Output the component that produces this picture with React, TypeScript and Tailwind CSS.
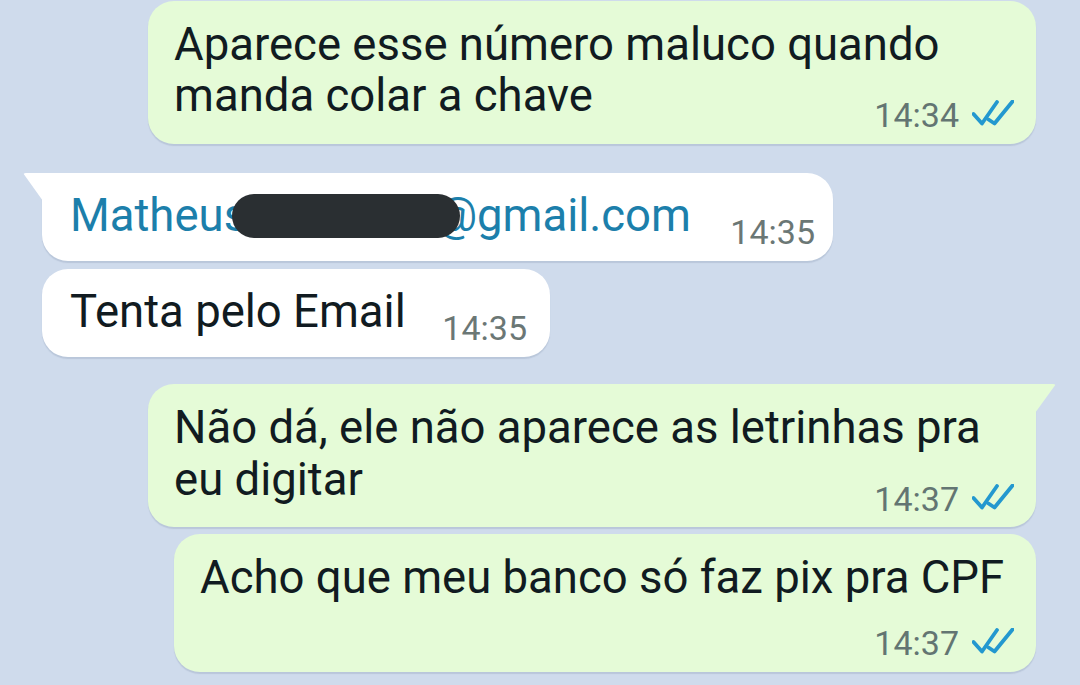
import React from "react";

function Ticks() {
  return (
    <svg width="42" height="26" viewBox="0 0 42 26" fill="none" className="ml-[13px] -mt-[4px]">
      <path d="M1.5 14 L10 23.5 L25 2" stroke="#2398cf" strokeWidth="3.8" strokeLinecap="round" strokeLinejoin="round" />
      <path d="M16.5 19.5 L22.5 23.5 L40.5 1.5" stroke="#2398cf" strokeWidth="3.8" strokeLinecap="round" strokeLinejoin="round" />
    </svg>
  );
}

function OutTime({ time, className }: { time: string; className: string }) {
  return (
    <div className={`flex items-center justify-end ${className}`}>
      <span className="text-[34px] leading-[40px] text-[#637572]">{time}</span>
      <Ticks />
    </div>
  );
}

export default function App() {
  return (
    <div
      className="w-full h-[685px] overflow-hidden bg-[#cfdbec] flex flex-col pt-[1px]"
      style={{ fontFamily: "Roboto, 'Noto Sans', sans-serif" }}
    >
      {/* sent */}
      <div className="flex justify-end pr-[44px]">
        <div className="w-[888px] rounded-[26px] bg-[#e5fbd7] shadow-[0_2px_1px_rgba(60,80,110,0.14)] pl-[26px] pr-[22px] pt-[18px] pb-[9px]">
          <p className="text-[45.5px] leading-[51px] text-[#111b21]">Aparece esse número maluco quando manda colar a chave</p>
          <OutTime time="14:34" className="-mt-[26px]" />
        </div>
      </div>

      {/* received */}
      <div className="flex pl-[42px] mt-[29px]">
        <div className="relative w-[791px] rounded-[26px] rounded-tl-none bg-white shadow-[0_2px_1px_rgba(60,80,110,0.14)] pl-[28px] pr-[18px] pt-[17px] pb-[9px] flex items-end justify-between">
          <div className="absolute -left-[19px] top-0 w-[20px] h-[28px] bg-white [clip-path:polygon(0_0,100%_0,100%_100%)] rounded-tl-[3px]" />
          <p className="text-[45.5px] leading-[51px] text-[#1c7fab] mb-[11px] whitespace-nowrap">
            Matheus
            <span className="relative z-10 inline-block w-[228px] h-[44px] rounded-full bg-[#2a2f32] align-[-7px] -ml-[15px] -mr-[24px]" />
            @gmail.com
          </p>
          <span className="text-[34px] leading-[40px] text-[#6b7775]">14:35</span>
        </div>
      </div>

      <div className="flex pl-[42px] mt-[8px]">
        <div className="w-[508px] rounded-[26px] bg-white shadow-[0_2px_1px_rgba(60,80,110,0.14)] pl-[28px] pr-[23px] pt-[17px] pb-[9px] flex items-end justify-between">
          <p className="text-[45.5px] leading-[51px] text-[#111b21] mb-[11px] whitespace-nowrap">Tenta pelo Email</p>
          <span className="text-[34px] leading-[40px] text-[#6b7775]">14:35</span>
        </div>
      </div>

      {/* sent */}
      <div className="flex justify-end pr-[44px] mt-[27px]">
        <div className="relative w-[888px] rounded-[26px] rounded-tr-none bg-[#e5fbd7] shadow-[0_2px_1px_rgba(60,80,110,0.14)] pl-[26px] pr-[22px] pt-[18px] pb-[8px]">
          <div className="absolute -right-[20px] top-0 w-[21px] h-[29px] bg-[#e5fbd7] [clip-path:polygon(0_0,100%_0,0_100%)] rounded-tr-[3px]" />
          <p className="text-[45.5px] leading-[52px] text-[#111b21]">Não dá, ele não aparece as letrinhas pra eu digitar</p>
          <OutTime time="14:37" className="-mt-[27px]" />
        </div>
      </div>

      <div className="flex justify-end pr-[44px] mt-[7px]">
        <div className="w-[862px] rounded-[26px] bg-[#e5fbd7] shadow-[0_2px_1px_rgba(60,80,110,0.14)] pl-[26px] pr-[22px] pt-[18px] pb-[9px]">
          <p className="text-[45.5px] leading-[51px] text-[#111b21] whitespace-nowrap">Acho que meu banco só faz pix pra CPF</p>
          <OutTime time="14:37" className="mt-[20px]" />
        </div>
      </div>
    </div>
  );
}
